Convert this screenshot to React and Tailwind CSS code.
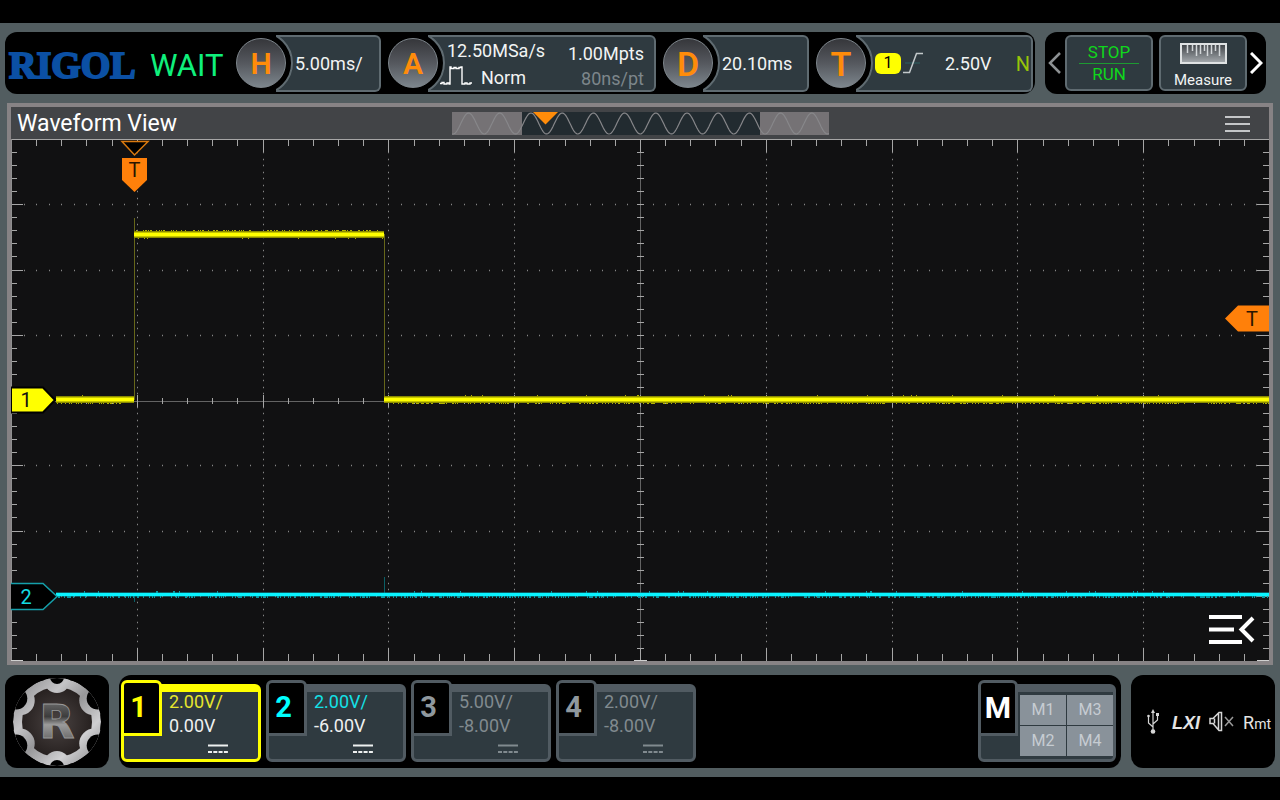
import { clsx } from 'clsx';

// plot geometry, 10 x 8 divisions
const W = 1258;
const H = 522;
const DX = W / 10;
const DY = H / 8;

const CHANNELS = [
  { id: 1, scale: '2.00V/', offset: '0.00V', active: true, num: 'text-[#ffff00]', scaleColor: 'text-[#e6e62e]', offsetColor: 'text-[#eef0f0]' },
  { id: 2, scale: '2.00V/', offset: '-6.00V', num: 'text-[#00ffff]', scaleColor: 'text-[#14e0e6]', offsetColor: 'text-[#eef0f0]' },
  { id: 3, scale: '5.00V/', offset: '-8.00V', num: 'text-[#8f989e]', scaleColor: 'text-[#818a8f]', offsetColor: 'text-[#818a8f]' },
  { id: 4, scale: '2.00V/', offset: '-8.00V', num: 'text-[#8f989e]', scaleColor: 'text-[#818a8f]', offsetColor: 'text-[#818a8f]' },
];

const range = (n) => Array.from({ length: n }, (_, i) => i);
const px = (v) => Math.round(v) + 0.5;

function ticksPath() {
  let d = '';
  range(49).forEach((i) => {
    const x = px((i + 1) * (DX / 5));
    const len = (i + 1) % 5 === 0 ? 13 : 7;
    d += `M${x} 0v${len}M${x} ${H}v${-len}`;
    const mid = (i + 1) % 5 === 0 ? 6 : 3;
    d += `M${x} ${262 - mid}v${mid * 2}`;
  });
  range(39).forEach((i) => {
    const y = px((i + 1) * (DY / 5));
    const len = (i + 1) % 5 === 0 ? 12 : 6;
    d += `M0 ${y}h${len}M${W} ${y}h${-len}M626 ${y}h7`;
  });
  return d;
}

function dotsPath() {
  let d = '';
  range(9).forEach((i) => {
    const x = Math.round((i + 1) * DX);
    if (i !== 4) range(79).forEach((j) => { d += `M${x} ${px((j + 1) * (DY / 10))}h1`; });
  });
  range(7).forEach((i) => {
    const y = px((i + 1) * DY);
    if (i !== 3) range(99).forEach((j) => { d += `M${Math.round((j + 1) * (DX / 10))} ${y}h1`; });
  });
  return d;
}

// short spikes above and below a flat trace
function noisePath(x0, x1, y, seed, reach) {
  let s = seed;
  let d = '';
  for (let x = x0; x < x1; x++) {
    s = (s * 1103515245 + 12345) % 2147483648;
    const r = s / 2147483648;
    if (r < 0.3) d += `M${x + 0.5} ${y}v${reach}`;
    else if (r > 0.97) d += `M${x + 0.5} ${y}v${-reach}`;
  }
  return d;
}

function sinePath() {
  let d = 'M0 22';
  for (let x = 1; x <= 377; x++) {
    d += `L${x} ${(11.5 + 10.5 * Math.cos(((x - 1) / 31.2) * 2 * Math.PI)).toFixed(2)}`;
  }
  return d;
}

function Pod({ letter, big, label, children }) {
  return (
    <button aria-label={label} className="flex h-full items-center text-left">
      <span
        className={clsx(
          'relative z-10 flex size-[50px] shrink-0 items-center justify-center rounded-full border border-[#7d858b] bg-linear-to-b from-[#36373b] via-[#55585e] to-[#7d868d] pt-[2px] font-semibold text-[#ff8c0a]',
          big ? 'text-[34px]' : 'text-[30px]'
        )}
      >
        {letter}
      </span>
      <span className="relative -ml-[10px] flex h-[57px] min-w-0 flex-1 items-center overflow-hidden rounded-r-md border-2 border-l-0 border-[#5f6b71] bg-[#2f3a40]">
        <span className="absolute top-1/2 -left-[47px] size-16 -translate-y-1/2 rounded-full border-2 border-[#5f6b71] bg-black" />
        {children}
      </span>
    </button>
  );
}

function TopBar() {
  return (
    <header className="flex h-[62px] gap-[10px] pr-[14px] pl-[5px]">
      <div className="flex min-w-0 flex-1 items-center rounded-xl bg-black pr-[2px] pl-1">
        <span className="w-[141px] shrink-0 pt-1 font-['Liberation_Serif',serif] text-[38px] leading-none font-bold text-[#0b50a4] [-webkit-text-stroke:2px_#0b50a4]">
          RIGOL
        </span>
        <span className="w-[86px] shrink-0 pt-1 text-[31px] leading-none text-[#0ff07c]">WAIT</span>
        <div className="grid h-full min-w-0 flex-1 grid-cols-[145fr_268fr_146fr_217fr] gap-[7px] text-lg leading-none text-[#f2f4f4]">
          <Pod letter="H" label="Horizontal">
            <span className="relative pt-[2px] pl-[19px]">5.00ms/</span>
          </Pod>
          <Pod letter="A" label="Acquire">
            <span className="relative flex w-full justify-between pt-1 pr-[10px] pl-3">
              <span className="flex flex-col gap-[5px]">
                <span className="pl-[7px]">12.50MSa/s</span>
                <span className="flex items-center gap-[6px]">
                  <svg width="35" height="20" viewBox="0 0 35 20" fill="none" stroke="#fff" strokeWidth="1.4">
                    <path d="M0 17.500h2v-1h2v1.500h3v-1h2v1h1V1h1v1.500h3v-1h2v1h3v-1h2V1h1V18h3v-1h2v1h3v-1h2" />
                  </svg>
                  <span className="pt-1">Norm</span>
                </span>
              </span>
              <span className="flex flex-col items-end gap-[7px] pt-[3px]">
                <span>1.00Mpts</span>
                <span className="text-[#7d868b]">80ns/pt</span>
              </span>
            </span>
          </Pod>
          <Pod letter="D" label="Delay" big>
            <span className="relative pt-[2px] pl-[19px]">20.10ms</span>
          </Pod>
          <Pod letter="T" label="Trigger" big>
            <span className="relative flex w-full items-center pr-px pl-[19px]">
              <span className="flex h-[21px] w-[26px] items-center justify-center rounded-md bg-[#ffff00] text-base text-black">1</span>
              <svg className="ml-[2px]" width="20" height="22" viewBox="0 0 20 22" fill="none" stroke="#c3c9cb" strokeWidth="1.500">
                <path d="M2 11h15" stroke="#2e5557" />
                <path d="M0 20.500h6.500L13.500 1.500H20" />
              </svg>
              <span className="ml-[22px] pt-[2px]">2.50V</span>
              <span className="ml-auto pt-[2px] text-xl text-[#97c40a]">N</span>
            </span>
          </Pod>
        </div>
      </div>

      <div className="flex items-center rounded-xl bg-black px-[3px] pb-px">
        <button aria-label="Previous">
          <svg width="13" height="22" viewBox="0 0 13 22" fill="none" stroke="#8d9193" strokeWidth="2.500">
            <path d="M12 1L2 11l10 10" />
          </svg>
        </button>
        <button className="ml-1 flex h-[56px] w-[88px] flex-col items-center justify-center rounded-md border-2 border-[#5f6b71] bg-[#2f3a40] pt-[2px] text-[17px] leading-[19px] text-[#0fd71c]">
          <span>STOP</span>
          <span className="my-px h-px w-[60px] bg-[#1d9a32]" />
          <span>RUN</span>
        </button>
        <button className="ml-[6px] flex h-[56px] w-[88px] flex-col items-center justify-end gap-[7px] rounded-md border-2 border-[#5f6b71] bg-[#2f3a40] text-[15px] leading-[18px] text-[#f2f4f4]">
          <svg width="47" height="21" viewBox="0 0 47 21">
            <defs>
              <linearGradient id="ruler" x1="0" y1="0" x2="0" y2="1">
                <stop offset="0" stopColor="#3d4145" />
                <stop offset="1" stopColor="#a7acb0" />
              </linearGradient>
            </defs>
            <rect x="1" y="1" width="45" height="19" fill="url(#ruler)" stroke="#dfe2e3" strokeWidth="2" />
            <path d="M7.500 2v8M12.500 2v6M16.500 2v11M20.500 2v9M24.500 2v6M27.500 2v11M31.500 2v9M35.500 2v6M39.500 2v11" stroke="#d3d7d9" strokeWidth="1.500" />
          </svg>
          Measure
        </button>
        <button aria-label="Next" className="ml-[3px]">
          <svg width="13" height="22" viewBox="0 0 13 22" fill="none" stroke="#fff" strokeWidth="3">
            <path d="M1 1l10 10L1 21" />
          </svg>
        </button>
      </div>
    </header>
  );
}

function MemoryBar() {
  return (
    <svg width="377" height="23" viewBox="0 0 377 23">
      <rect width="377" height="23" fill="#757275" />
      <rect x="70" width="238" height="23" fill="#222b30" />
      <path d={sinePath()} fill="none" stroke="#87878a" strokeWidth="1.2" />
      <path d="M81 0h25L93.500 12.500z" fill="#ff8c0a" />
    </svg>
  );
}

function Plot() {
  return (
    <svg viewBox={`0 0 ${W} ${H}`} className="block h-auto w-full bg-[#111112]" fontSize="20">
      <path d={dotsPath()} stroke="#858585" strokeWidth="1.4" />
      <path d={`M0 262.500H${W}M629.500 0V${H}`} stroke="#636363" />
      <path d={ticksPath()} stroke="#a6a6a6" />
      <path d={`M0 .5H${W}`} stroke="#a6a6a6" />
      <path d={`M.5 0V${H}`} stroke="#8f8f8f" />
      <path d={`M0 ${H - 0.5}h12M${W} ${H - 0.5}h-12M623 ${H - 0.5}h13`} stroke="#d0d0d0" />

      {/* channel 1 */}
      <path d="M123.500 79V261M373.500 95V261" stroke="#66661a" />
      <path d={noisePath(124, 372, 95.5, 7, -4.5) + noisePath(45, 122, 260.5, 3, 4.5) + noisePath(374, W, 260.5, 11, 4.5)} stroke="#b4b400" />
      <path d="M123 95.500H373M45 260.500H123M373 260.500H1258" stroke="#8a8a00" strokeWidth="7" />
      <path d="M123 95.500H373M45 260.500H123M373 260.500H1258" stroke="#ffff00" strokeWidth="4" />

      {/* channel 2 */}
      <path d="M373.500 438v18M123.500 456v7" stroke="#0b5f66" />
      <path d={noisePath(45, W, 455.5, 23, 3.5)} stroke="#0a9aa3" />
      <path d="M45 455.500H1258" stroke="#0ba3ab" strokeWidth="4" />
      <path d="M45 455.500H1258" stroke="#0af4ff" strokeWidth="3" />

      <path d="M0 248.500H32L44 261 32 273.500H0z" fill="#ffff00" stroke="#000" strokeWidth="2" />
      <text x="15" y="268" textAnchor="middle" fill="#111">1</text>
      <path d="M0 444.500H32L46 457.500 32 470.500H0" fill="#000" stroke="#159faa" strokeWidth="1.500" />
      <text x="15" y="465" textAnchor="middle" fill="#14dbe3">2</text>

      <path d="M111 2.500H137L123.500 16z" fill="#000" stroke="#d9790f" strokeWidth="1.500" />
      <path d="M111 19H136V41L123.500 53 111 41z" fill="#ff800a" />
      <text x="123.500" y="38" textAnchor="middle" fill="#2a1500">T</text>
      <path d="M1258 166.500H1227L1214 179.500 1227 192.500H1258z" fill="#ff800a" />
      <text x="1241" y="187" textAnchor="middle" fill="#2a1500">T</text>
    </svg>
  );
}

function WaveformView() {
  return (
    <main className="mx-[7px] border-4 border-[#878385]">
      <div className="grid h-8 grid-cols-[1fr_auto_1fr] items-center bg-[#424447]">
        <h1 className="pt-[2px] pl-[6px] text-[23px] leading-[30px] text-white">Waveform View</h1>
        <MemoryBar />
        <button aria-label="View menu" className="mr-[19px] justify-self-end pt-[2px]">
          <svg width="25" height="16" viewBox="0 0 25 16" stroke="#c4c6c8" strokeWidth="2">
            <path d="M0 1h25M0 8h25M0 15h25" />
          </svg>
        </button>
      </div>
      <div className="relative">
        <Plot />
        <button aria-label="Open side menu" className="absolute right-[14px] bottom-4">
          <svg width="46" height="31" viewBox="0 0 46 31" fill="none" stroke="#fff" strokeWidth="4">
            <path d="M0 3h33M0 15.500h25M0 28h33M44 4L32.500 15.500 44 27" />
          </svg>
        </button>
      </div>
    </main>
  );
}

function Gear() {
  const notches = [30, 150, 210, 330].map((a) => [
    Math.cos((a * Math.PI) / 180),
    Math.sin((a * Math.PI) / 180),
  ]);
  return (
    <svg width="90" height="90" viewBox="-45 -45 90 90">
      <defs>
        <linearGradient id="steel" gradientUnits="userSpaceOnUse" x1="-40" y1="-40" x2="40" y2="40">
          <stop offset="0" stopColor="#8c8c8e" />
          <stop offset=".3" stopColor="#c4c4c6" />
          <stop offset=".5" stopColor="#979799" />
          <stop offset=".75" stopColor="#cfcfd1" />
          <stop offset="1" stopColor="#8c8c8e" />
        </linearGradient>
        <radialGradient id="core">
          <stop offset="0" stopColor="#4a4342" />
          <stop offset="1" stopColor="#272120" />
        </radialGradient>
        <linearGradient id="emblem" x1="0" y1="0" x2="0" y2="1">
          <stop offset="0" stopColor="#7e7e7e" />
          <stop offset=".4" stopColor="#3c3c3c" />
          <stop offset=".55" stopColor="#9c9c9c" />
          <stop offset="1" stopColor="#4a4a4a" />
        </linearGradient>
        <clipPath id="disc">
          <circle r="44" />
        </clipPath>
      </defs>
      <g clipPath="url(#disc)">
        <circle r="44" fill="url(#steel)" />
        <circle r="35" fill="url(#core)" />
        {notches.map(([x, y]) => (
          <circle key={`${x} ${y}`} cx={x * 43} cy={y * 43} r="15" fill="url(#steel)" />
        ))}
        <circle cy="-42" r="13" fill="url(#steel)" />
        <circle cy="42" r="13" fill="url(#steel)" />
        {notches.map(([x, y]) => (
          <circle key={`${x} ${y}`} cx={x * 47} cy={y * 47} r="11" />
        ))}
        <circle cy="-45" r="7" />
        <circle cy="45" r="7" />
      </g>
      <text y="16" textAnchor="middle" fontFamily="DejaVu Sans" fontWeight="bold" fontSize="46" fill="url(#emblem)" stroke="#999" strokeWidth=".8">
        R
      </text>
    </svg>
  );
}

function Channel({ ch }) {
  return (
    <button
      aria-label={`Channel ${ch.id}`}
      className={clsx(
        'relative flex h-[78px] w-[140px] flex-col rounded-md border-3 border-t-8 bg-[#2f3a40] pl-[45px] text-left text-lg leading-6',
        ch.active ? 'border-[#ffff00]' : 'border-[#515b62]'
      )}
    >
      <span
        className={clsx(
          'absolute -top-3 -left-[3px] flex h-[56px] w-[41px] items-center justify-center rounded-t-md border-3 bg-black pr-[6px] pb-[2px] text-[29px] font-bold',
          ch.active ? 'border-[#ffff00]' : 'border-[#515b62]',
          ch.num
        )}
      >
        {ch.id}
      </span>
      <span className={clsx('-mt-[2px]', ch.scaleColor)}>{ch.scale}</span>
      <span className={ch.offsetColor}>{ch.offset}</span>
      <svg
        className={clsx('mt-[6px] ml-[39px]', ch.offsetColor)}
        width="20"
        height="10"
        viewBox="0 0 20 10"
        stroke="currentColor"
        strokeWidth="2"
      >
        <path d="M0 1.500h20" />
        <path d="M0 8h20" strokeDasharray="4 1.300" />
      </svg>
    </button>
  );
}

function BottomBar() {
  return (
    <footer className="flex h-[93px] gap-[10px] px-[5px]">
      <button aria-label="Main menu" className="flex w-[104px] items-center justify-center rounded-xl bg-black">
        <Gear />
      </button>

      <div className="flex flex-1 items-start justify-between rounded-xl bg-black pt-[9px] pr-[5px] pl-[2px]">
        <div className="flex gap-[5px]">
          {CHANNELS.map((ch) => (
            <Channel key={ch.id} ch={ch} />
          ))}
        </div>
        <div className="relative h-[78px] w-[138px] rounded-md border-3 border-t-8 border-[#515b62] bg-[#2f3a40] pt-[3px] pl-[39px]">
          <span className="absolute -top-3 -left-[3px] flex h-[56px] w-[40px] items-center justify-center rounded-t-md border-3 border-[#515b62] bg-black pb-[2px] text-[30px] font-bold text-white">
            M
          </span>
          <div className="grid grid-cols-2 gap-px text-base text-[#c6ccd2]">
            {['M1', 'M3', 'M2', 'M4'].map((m) => (
              <button key={m} className="h-[30px] bg-[#89929a]">
                {m}
              </button>
            ))}
          </div>
        </div>
      </div>

      <div className="flex w-[144px] items-center justify-end rounded-xl bg-black pr-1 text-[#e4e4e4]">
        <svg width="12" height="25" viewBox="0 0 12 25" fill="none" stroke="#d6d6d6" strokeWidth="1.2">
          <path d="M6 2v20M6 18L1.500 14V8M6 15l4.500-4V6" />
          <path d="M6 0l2 4H4z" fill="#d6d6d6" stroke="none" />
          <circle cx="1.500" cy="7" r="1.300" fill="#d6d6d6" stroke="none" />
          <path d="M9 4h3v3H9z" fill="#d6d6d6" stroke="none" />
          <circle cx="6" cy="22.500" r="2.300" fill="#d6d6d6" stroke="none" />
        </svg>
        <span className="ml-[13px] pt-[2px] font-['Liberation_Sans',sans-serif] text-lg leading-none font-bold italic">LXI</span>
        <svg className="ml-[9px]" width="26" height="21" viewBox="0 0 26 21" fill="none" stroke="#d6d6d6" strokeWidth="1.500">
          <path d="M1 7.500v5h3l6 7h2.500v-18H10l-6 6zM5.500 7.500v5M9.500 2v17" />
          <path d="M16 6l8 9M24 6l-8 9" stroke="#9a9a9a" />
        </svg>
        <span className="ml-[8px] pt-[2px] text-lg leading-none">
          R<span className="text-sm leading-none">mt</span>
        </span>
      </div>
    </footer>
  );
}

export default function App() {
  return (
    <div className="min-h-screen bg-black py-[23px] font-[Roboto,sans-serif]">
      <div className="flex flex-col bg-[#525d60] py-[9px]">
        <TopBar />
        <div className="mt-[9px] mb-[10px]">
          <WaveformView />
        </div>
        <BottomBar />
      </div>
    </div>
  );
}
